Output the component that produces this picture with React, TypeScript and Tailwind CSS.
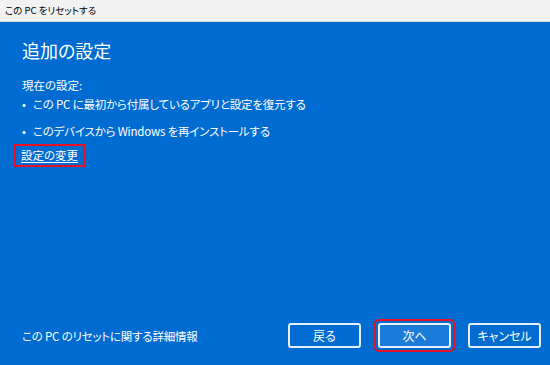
const font = {
  fontFamily: '"Noto Sans CJK JP", "Noto Sans", sans-serif',
  fontFeatureSettings: '"palt"',
};

function DialogButton({
  children,
  highlighted,
}: {
  children: React.ReactNode;
  highlighted?: boolean;
}) {
  return (
    <div
      className={
        highlighted
          ? "rounded-[1px] outline-2 outline-[#e81123] outline-offset-[2px]"
          : ""
      }
    >
      <button
        type="button"
        className={`flex h-[25px] w-[73px] items-center justify-center rounded-[3px] border-2 border-white/90 text-[12px] text-white ${
          highlighted ? "bg-[#1a7bd8]" : "bg-[#006cd2]"
        }`}
      >
        {children}
      </button>
    </div>
  );
}

export default function App() {
  return (
    <div className="flex h-[365px] w-[550px] flex-col overflow-hidden" style={font}>
      {/* Title bar */}
      <div className="flex h-[22px] items-center border-b border-[#d9d9d9] bg-[#f2f2f2] px-[5px] text-[9.5px] text-black">
        この PC をリセットする
      </div>

      {/* Body */}
      <div className="flex flex-1 flex-col bg-[#006cd2] px-[22px] pb-[17px] pt-[14px] text-white">
        <h1 className="text-[18px] leading-[28px] font-normal">追加の設定</h1>

        <div className="mt-[13px] text-[11.5px] leading-[16px]">現在の設定:</div>
        <ul className="mt-[3px] flex flex-col gap-[11px] text-[11.5px] leading-[16px]">
          <li className="flex">
            <span className="w-[11px]">•</span>
            <span className="tracking-[-0.2px]">この PC に最初から付属しているアプリと設定を復元する</span>
          </li>
          <li className="flex">
            <span className="w-[11px]">•</span>
            <span className="tracking-[-0.2px]">このデバイスから Windows を再インストールする</span>
          </li>
        </ul>

        <div className="mt-[5px] flex">
          <div className="-ml-[8px] flex h-[23px] items-center border-2 border-[#e81123] px-[5px]">
            <a className="text-[11.5px] leading-[17px] text-white underline underline-offset-2">
              設定の変更
            </a>
          </div>
        </div>

        <div className="mt-auto flex items-center">
          <span className="flex-1 text-[11.5px] leading-[16px] tracking-[-0.2px]">
            この PC のリセットに関する詳細情報
          </span>
          <div className="-mr-[13px] flex items-center gap-[17px]">
            <DialogButton>戻る</DialogButton>
            <DialogButton highlighted>次へ</DialogButton>
            <DialogButton>キャンセル</DialogButton>
          </div>
        </div>
      </div>
    </div>
  );
}
